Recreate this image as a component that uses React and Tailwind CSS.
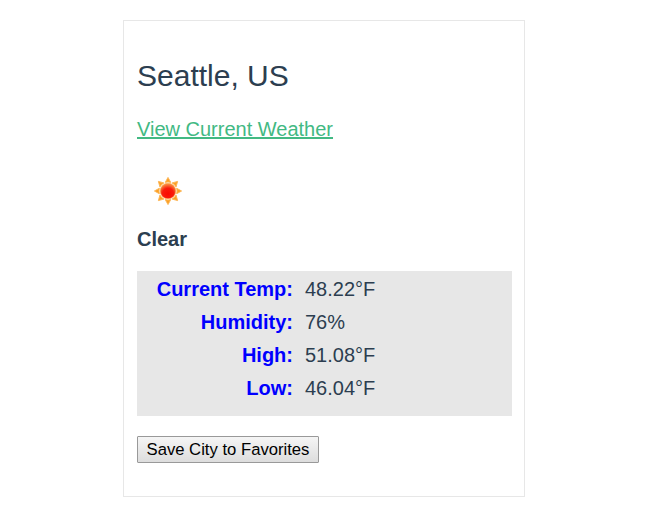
const readings = [
  { label: 'Current Temp:', value: '48.22°F' },
  { label: 'Humidity:', value: '76%' },
  { label: 'High:', value: '51.08°F' },
  { label: 'Low:', value: '46.04°F' },
];

const rayAngles = [0, 45, 90, 135, 180, 225, 270, 315];

function SunIcon() {
  return (
    <svg className="ml-[15px] block h-8 w-8" viewBox="0 0 32 32" aria-hidden="true">
      <defs>
        <radialGradient id="sunBody" cx="0.5" cy="0.68" r="0.72">
          <stop offset="0" stopColor="#fa0a00" />
          <stop offset="0.5" stopColor="#f91c0c" />
          <stop offset="0.72" stopColor="#f8602c" />
          <stop offset="1" stopColor="#fcb04c" />
        </radialGradient>
      </defs>
      {rayAngles.map((angle) => (
        <path
          key={angle}
          d="M16 2.4 L18.8 7.4 Q16 6.5 13.2 7.4 Z"
          fill="#fca024"
          stroke="#fcb454"
          strokeWidth="0.9"
          strokeLinejoin="round"
          transform={`rotate(${angle} 16 16)`}
        />
      ))}
      <circle cx="16" cy="16" r="7.8" fill="url(#sunBody)" stroke="#fba546" strokeWidth="0.6" />
    </svg>
  );
}

export default function App() {
  return (
    <div className="h-[518px] bg-white pt-5 pl-[123px] font-['Liberation_Sans',Arial,sans-serif] text-[20px] text-[#2c3e50]">
      <section className="h-[477px] w-[402px] border border-[#e7e7e7] px-[13px] pt-[37px]">
        <h2 className="text-[30px] leading-[36px]">Seattle, US</h2>
        <a href="#" className="mt-[23px] block w-fit leading-6 text-[#42b983] underline decoration-2 underline-offset-1">
          View Current Weather
        </a>
        <div className="mt-[34px]">
          <SunIcon />
        </div>
        <p className="mt-5 leading-6 font-bold">Clear</p>
        <dl className="mt-5 h-[145px] w-[375px] bg-[#e7e7e7] pt-[2px]">
          {readings.map((r) => (
            <div key={r.label} className="flex h-[33px] gap-3 leading-[33px]">
              <dt className="w-[156px] text-right font-bold text-[#0000ff]">{r.label}</dt>
              <dd>{r.value}</dd>
            </div>
          ))}
        </dl>
        <button className="mt-5 block h-[27px] w-[182px] rounded-[1px] border border-[#999] bg-linear-to-b from-[#f5f5f5] to-[#dddddd] text-[16.667px] leading-[25px] whitespace-nowrap text-black">
          Save City to Favorites
        </button>
      </section>
    </div>
  );
}
